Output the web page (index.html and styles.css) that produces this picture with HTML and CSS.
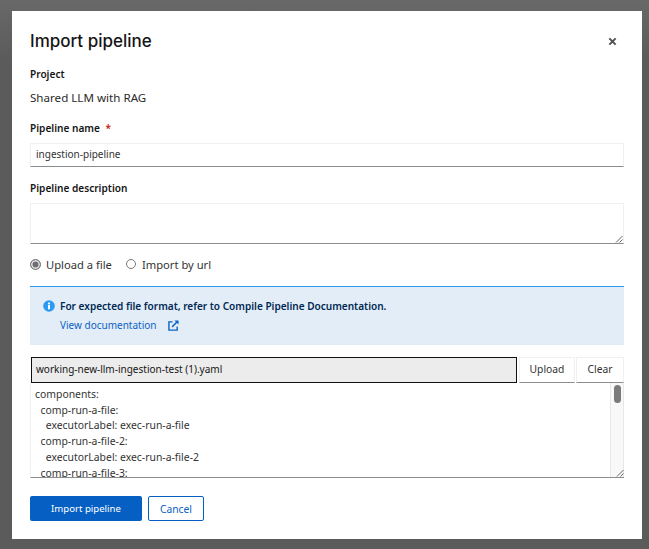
FILE: index.html
```html
<!DOCTYPE html>
<html lang="en">
<head>
  <meta charset="UTF-8">
  <title>Import pipeline</title>
  <link rel="stylesheet" href="styles.css">
</head>
<body>
  <div class="modal">
    <div class="modal-header">
      <h1>Import pipeline</h1>
      <button class="close-btn" aria-label="Close">
        <svg viewBox="0 0 10 10" width="9" height="9"><path d="M1.5 1.5 L8.5 8.5 M8.5 1.5 L1.5 8.5" stroke="#4f5255" stroke-width="2.2" fill="none"/></svg>
      </button>
    </div>

    <div class="form">
      <div class="group-project">
        <div class="label">Project</div>
        <div class="project-name">Shared LLM with RAG</div>
      </div>

      <div class="group-name">
        <div class="label">Pipeline name <span class="required">*</span></div>
        <div class="text-input">ingestion-pipeline</div>
      </div>

      <div class="group-desc">
        <div class="label">Pipeline description</div>
        <div class="text-area">
          <svg class="grip" viewBox="0 0 8 8" width="8" height="8"><path d="M1 7.5 L7.5 1 M4.5 7.5 L7.5 4.5" stroke="#555" stroke-width="0.9" fill="none"/></svg>
        </div>
      </div>

      <div class="radio-row">
        <label class="radio"><span class="radio-dot checked"></span>Upload a file</label>
        <label class="radio"><span class="radio-dot"></span>Import by url</label>
      </div>

      <div class="alert">
        <div class="alert-title">
          <svg viewBox="0 0 12 12" width="12" height="12"><circle cx="6" cy="6" r="5.8" fill="#2b9af3"/><rect x="5" y="5" width="2" height="4.3" fill="#fff"/><rect x="5" y="2.6" width="2" height="1.7" fill="#fff"/></svg>
          <span>For expected file format, refer to Compile Pipeline Documentation.</span>
        </div>
        <div class="alert-link">
          <span>View documentation</span>
          <svg viewBox="0 0 12 12" width="11" height="11"><path d="M5 2 H1 V11 H10 V7" stroke="#0b63c5" stroke-width="1.5" fill="none"/><path d="M4.5 7.5 L10 2" stroke="#0b63c5" stroke-width="1.6" fill="none"/><path d="M7 0.5 H11.5 V5 Z" fill="#0b63c5"/></svg>
        </div>
      </div>

      <div class="file-upload">
        <div class="file-row">
          <div class="file-name">working-new-llm-ingestion-test (1).yaml</div>
          <div class="file-btn file-btn-upload">Upload</div>
          <div class="file-btn file-btn-clear">Clear</div>
        </div>
        <div class="file-content">
          <div class="code">components:
  comp-run-a-file:
    executorLabel: exec-run-a-file
  comp-run-a-file-2:
    executorLabel: exec-run-a-file-2
  comp-run-a-file-3:</div>
          <div class="scrollbar"><div class="thumb"></div></div>
          <svg class="grip" viewBox="0 0 8 8" width="8" height="8"><path d="M1 7.5 L7.5 1 M4.5 7.5 L7.5 4.5" stroke="#555" stroke-width="0.9" fill="none"/></svg>
        </div>
      </div>
    </div>

    <div class="modal-footer">
      <button class="btn btn-primary">Import pipeline</button>
      <button class="btn btn-link">Cancel</button>
    </div>
  </div>
</body>
</html>
```

FILE: styles.css
```css
* {
  box-sizing: border-box;
}

html, body {
  height: 100%;
}

body {
  margin: 0;
  padding: 11px 7px 10px 12px;
  background: linear-gradient(#686868, #5b5b5b 60px);
  font-family: "Noto Sans", Arial, sans-serif;
  color: #151515;
  overflow: hidden;
}

.modal {
  height: 528px;
  background-color: white;
  padding: 0 18px;
}

.modal-header {
  display: flex;
  justify-content: space-between;
  align-items: center;
  height: 47px;
  padding-top: 13px;
}

.modal-header h1 {
  margin: 0;
  font-family: Inter, Arial, sans-serif;
  font-size: 17px;
  font-weight: 500;
  line-height: 30px;
}

.close-btn {
  border: none;
  background: none;
  padding: 0;
  margin-right: 7px;
  display: flex;
}

.label {
  font-size: 10.1px;
  font-weight: 600;
  line-height: 16px;
}

.required {
  color: #c9190b;
  margin-left: 3px;
}

.group-project {
  margin-top: 8px;
}

.project-name {
  font-size: 11.6px;
  line-height: 16px;
  margin-top: 8px;
  color: #2a2a2a;
}

.group-name {
  margin-top: 14px;
}

.text-input {
  height: 24px;
  margin-top: 7px;
  padding: 0 5px;
  font-size: 10px;
  line-height: 21px;
  border: 1px solid #f0f0f0;
  border-bottom: 1px solid #8a8d90;
  color: #333;
}

.group-desc {
  margin-top: 13px;
}

.text-area {
  position: relative;
  height: 41px;
  margin-top: 7px;
  border: 1px solid #f0f0f0;
  border-bottom: 1px solid #8a8d90;
}

.grip {
  position: absolute;
  right: 0;
  bottom: 0;
}

.radio-row {
  display: flex;
  gap: 14px;
  margin-top: 12px;
  height: 16px;
}

.radio {
  display: flex;
  align-items: center;
  gap: 6px;
  font-size: 11.2px;
  color: #333;
}

.radio-dot {
  width: 10px;
  height: 10px;
  border-radius: 50%;
  border: 1px solid #777;
  background-color: white;
}

.radio-dot.checked {
  width: 11px;
  height: 11px;
  margin-right: -1px;
  background-color: #6f6f6f;
  box-shadow: inset 0 0 0 1.5px #e4e4e4;
}

.alert {
  height: 59px;
  margin-top: 14px;
  padding: 12px 13px 0;
  background-color: #e3edf8;
  border-top: 1px solid #2b9af3;
}

.alert-title {
  display: flex;
  align-items: center;
  gap: 5px;
  font-size: 10.05px;
  font-weight: 600;
  line-height: 14px;
  color: #002952;
}

.alert-link {
  display: flex;
  align-items: center;
  gap: 12px;
  margin-top: 5px;
  margin-left: 17px;
  font-size: 10px;
  line-height: 14px;
  color: #0b63c5;
}

.file-upload {
  margin-top: 12px;
}

.file-row {
  display: flex;
  height: 26px;
}

.file-name {
  flex: 1;
  margin-left: 1px;
  padding: 0 4px;
  font-size: 10px;
  line-height: 23px;
  background-color: #ececec;
  border: 1px solid #111;
}

.file-btn {
  text-align: center;
  font-size: 10.3px;
  line-height: 23px;
  color: #333;
  border: 1px solid #f0f0f0;
  border-bottom: 1px solid #8a8d90;
  margin-left: 1px;
}

.file-btn-upload {
  width: 56px;
  margin-left: 2px;
}

.file-btn-clear {
  width: 48px;
}

.file-content {
  position: relative;
  display: flex;
  height: 95px;
  border-left: 1px solid #f0f0f0;
  border-bottom: 1px solid #8a8d90;
  overflow: hidden;
}

.code {
  flex: 1;
  padding: 4px 4px 0;
  font-size: 10.4px;
  line-height: 15.7px;
  color: #333;
  white-space: pre-wrap;
}

.scrollbar {
  width: 14px;
  padding: 2px 3px;
  background-color: #f8f8f8;
  border-left: 1px solid #e8e8e8;
  border-right: 1px solid #e8e8e8;
}

.thumb {
  width: 7px;
  height: 18px;
  border-radius: 4px;
  background-color: #7a7a7a;
}

.modal-footer {
  display: flex;
  gap: 6px;
  margin-top: 18px;
}

.btn {
  height: 25px;
  padding: 0;
  font-family: inherit;
  font-size: 10.3px;
  border-radius: 2px;
}

.btn-primary {
  width: 112px;
  background-color: #0660c4;
  color: white;
  border: none;
  font-size: 9.6px;
  font-weight: 400;
}

.btn-link {
  width: 56px;
  background-color: white;
  color: #0b63c5;
  border: 1px solid #0660c4;
}
```
